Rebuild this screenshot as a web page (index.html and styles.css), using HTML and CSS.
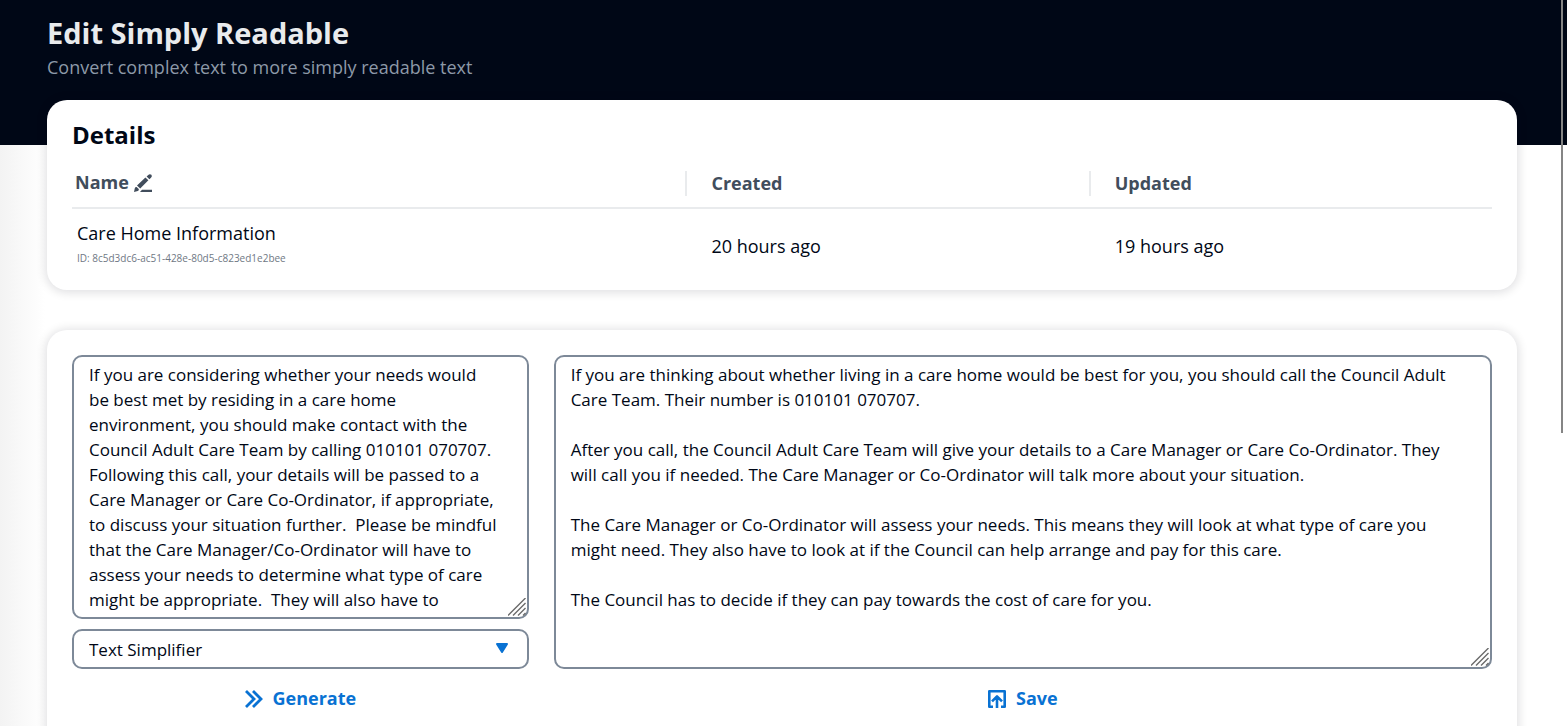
FILE: index.html
```
<!DOCTYPE html>
<html lang="en">
<head>
<meta charset="utf-8">
<title>Edit Simply Readable</title>
<link rel="stylesheet" href="styles.css">
</head>
<body>
<main class="page">
  <header class="page-header">
    <h1 class="page-title">Edit Simply Readable</h1>
    <p class="page-description">Convert complex text to more simply readable text</p>
  </header>

  <section class="card details">
    <h2 class="card-title">Details</h2>
    <table class="details-table">
      <thead>
        <tr>
          <th class="col-name" scope="col">
            <button class="name-button" type="button">Name
              <svg class="icon" viewBox="0 0 18 18" aria-hidden="true"><path fill="currentColor" d="M0 18 .8 14.200Q1.200 12.800 2.600 13L4.800 15Q5.200 16.400 3.800 17ZM3 11.400 11.400 3.400 14.400 6.200 6.200 14.400ZM12.600 2.600 14 1.200Q15.800-.6 17.400.8 18.600 2.400 17 3.800L15.400 5.200ZM8 15.800H18V18H6Z"/></svg>
            </button>
          </th>
          <th scope="col"><span class="head-label">Created</span></th>
          <th scope="col"><span class="head-label">Updated</span></th>
        </tr>
      </thead>
      <tbody>
        <tr>
          <td class="name-cell">
            <div>Care Home Information</div>
            <div class="item-id">ID: 8c5d3dc6-ac51-428e-80d5-c823ed1e2bee</div>
          </td>
          <td>20 hours ago</td>
          <td>19 hours ago</td>
        </tr>
      </tbody>
    </table>
  </section>

  <section class="card editor">
    <div class="source">
      <div class="field-wrap">
        <textarea class="field source-text" aria-label="Original text">If you are considering whether your needs would
be best met by residing in a care home
environment, you should make contact with the
Council Adult Care Team by calling 010101 070707.
Following this call, your details will be passed to a
Care Manager or Care Co-Ordinator, if appropriate,
to discuss your situation further.  Please be mindful
that the Care Manager/Co-Ordinator will have to
assess your needs to determine what type of care
might be appropriate.  They will also have to</textarea>
        <svg class="grip" viewBox="0 0 18 18" aria-hidden="true"><path d="M0 17.500 17.500 0M5 17.500 17.500 5M10 17.500 17.500 10M15 17.500 17.500 15" stroke="currentColor" stroke-width="1.400"/></svg>
      </div>
      <div class="field-wrap">
        <select class="field model" aria-label="Model"><option>Text Simplifier</option></select>
        <svg class="caret" viewBox="0 0 14 12" aria-hidden="true"><path d="M2 2H12L7 10Z" fill="currentColor" stroke="currentColor" stroke-width="2" stroke-linejoin="round"/></svg>
      </div>
    </div>
    <div class="field-wrap result-wrap">
      <textarea class="field result" aria-label="Simplified text">If you are thinking about whether living in a care home would be best for you, you should call the Council Adult
Care Team. Their number is 010101 070707.

After you call, the Council Adult Care Team will give your details to a Care Manager or Care Co-Ordinator. They
will call you if needed. The Care Manager or Co-Ordinator will talk more about your situation.

The Care Manager or Co-Ordinator will assess your needs. This means they will look at what type of care you
might need. They also have to look at if the Council can help arrange and pay for this care.

The Council has to decide if they can pay towards the cost of care for you.</textarea>
      <svg class="grip" viewBox="0 0 18 18" aria-hidden="true"><path d="M0 17.500 17.500 0M5 17.500 17.500 5M10 17.500 17.500 10M15 17.500 17.500 15" stroke="currentColor" stroke-width="1.400"/></svg>
    </div>
    <button class="action generate" type="button">
      <svg class="icon" viewBox="0 0 18 18" aria-hidden="true"><path fill="none" stroke="currentColor" stroke-width="2.800" d="M1 1 9 9 1 17M8 1 16 9 8 17"/></svg>
      Generate
    </button>
    <button class="action save" type="button">
      <svg class="icon" viewBox="0 0 18 18" aria-hidden="true"><path fill="none" stroke="currentColor" stroke-width="2.600" stroke-linejoin="round" d="M5 16.700H1.300V1.300H16.700V16.700H13M9 18V7M4 11.400 9 6.400 14 11.400"/></svg>
      Save
    </button>
  </section>
</main>
<div class="scroll-thumb"></div>
</body>
</html>
```
FILE: styles.css
```
* {
  box-sizing: border-box;
}

body {
  margin: 0;
  height: 100vh;
  overflow: hidden;
  position: relative;
  background:
    linear-gradient(#000716, #000716) top / 100% 145px no-repeat,
    linear-gradient(to right, #f3f3f3, #fff 45px);
  color: #000716;
  font-family: "Open Sans", "Noto Sans", sans-serif;
  font-size: 18px;
  line-height: 25px;
}

.page {
  padding: 10px 50px 0 47px;
}

.page-header {
  height: 90px;
}

.page-title {
  margin: 0;
  color: #e9ebed;
  font-size: 29px;
  line-height: 45px;
}

.page-description {
  margin: 0;
  color: #8d99a8;
}

.card {
  padding: 25px 25px 60px;
  border-radius: 20px;
  background: #fff;
  box-shadow: 0 1px 10px 2px rgba(0, 7, 22, 0.12);
}

.details {
  padding: 20px 25px 6px;
  margin-bottom: 40px;
}

.card-title {
  margin: 0 0 15px;
  font-size: 24px;
  line-height: 30px;
}

.details-table {
  width: 100%;
  table-layout: fixed;
  border-collapse: separate;
  border-spacing: 0;
}

.details-table th {
  padding: 6px 0 11px;
  border-bottom: 2px solid #e9ebed;
  color: #414d5c;
  text-align: left;
}

.details-table .col-name {
  width: 43.2%;
  padding: 5px 0 12px 3px;
}

.head-label {
  display: block;
  padding-left: 24px;
  border-left: 2px solid #e9ebed;
}

.details-table td {
  padding: 12px 0 13px 26px;
}

.details-table .name-cell {
  padding-left: 5px;
}

.item-id {
  color: #6f7884;
  font-size: 10px;
}

.name-button,
.action {
  display: flex;
  align-items: center;
  padding: 0;
  border: 0;
  background: none;
  color: inherit;
  font: inherit;
  font-weight: 700;
  cursor: pointer;
}

.name-button {
  gap: 5px;
}

.icon {
  width: 18px;
  height: 18px;
  overflow: visible;
}

.editor {
  display: grid;
  grid-template-columns: repeat(12, minmax(0, 1fr));
  gap: 17px 25px;
}

.source {
  grid-column: span 4;
  display: flex;
  flex-direction: column;
  gap: 10px;
}

.field-wrap {
  position: relative;
}

.field {
  display: block;
  width: 100%;
  border: 2px solid #7d8998;
  border-radius: 10px;
  background: #fff;
  color: inherit;
  font: inherit;
  font-size: 17px;
}

textarea.field {
  padding: 5px 15px;
  overflow: hidden;
  resize: none;
}

.source-text {
  height: 264px;
}

.result-wrap {
  grid-column: span 8;
}

.result {
  height: 314px;
}

.model {
  height: 40px;
  padding: 0 40px 0 15px;
  appearance: none;
}

.caret {
  position: absolute;
  top: 13px;
  right: 20px;
  width: 14px;
  height: 12px;
  color: #0972d3;
  pointer-events: none;
}

.grip {
  position: absolute;
  right: 3px;
  bottom: 3px;
  width: 18px;
  height: 18px;
  color: #6b6b6b;
  pointer-events: none;
}

.action {
  justify-self: center;
  gap: 10px;
  color: #0972d3;
}

.generate {
  grid-column: span 4;
}

.save {
  grid-column: span 8;
}

.scroll-thumb {
  position: absolute;
  top: 0;
  right: 4px;
  width: 2px;
  height: 433px;
  background: #858585;
}
```
